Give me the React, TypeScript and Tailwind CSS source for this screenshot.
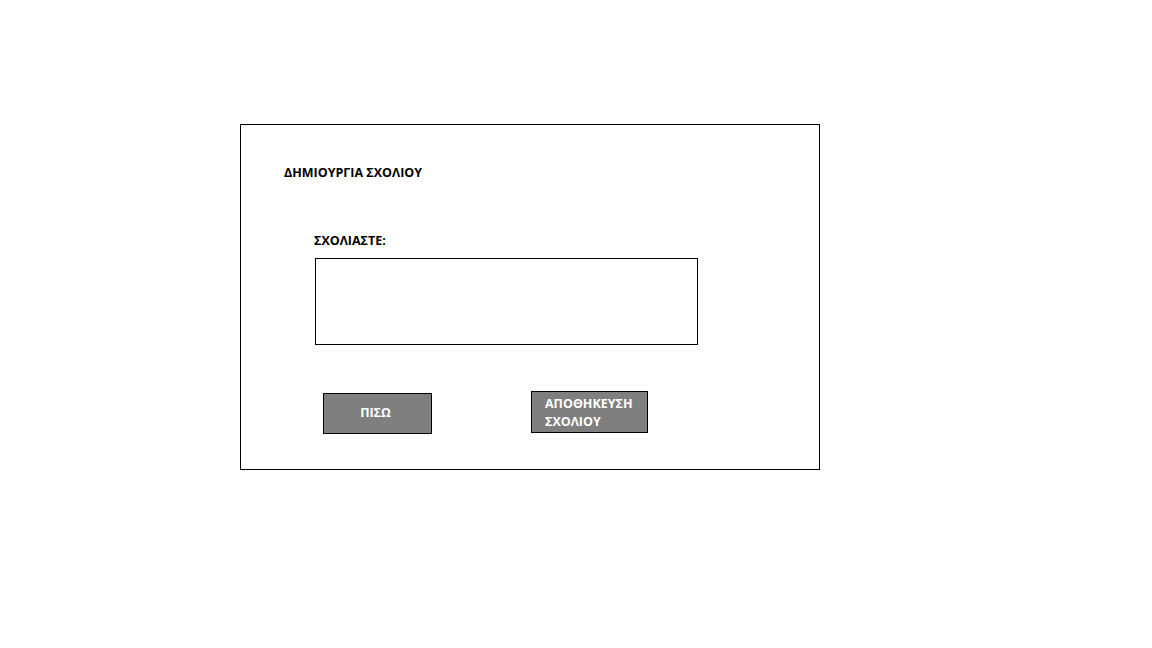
import React from "react";

export default function App() {
  const font = { fontFamily: '"Open Sans", "Noto Sans", sans-serif' };
  return (
    <div className="w-[1152px] h-[648px] bg-white overflow-hidden" style={font}>
      <div className="ml-[240px] mt-[124px] w-[580px] h-[346px] border border-black flex flex-col">
        <div className="ml-[43px] mt-[40px] text-[12.5px] leading-[16px] font-bold text-black">
          ΔΗΜΙΟΥΡΓΙΑ ΣΧΟΛΙΟΥ
        </div>
        <div className="ml-[73px] mt-[52px] text-[12.5px] leading-[16px] font-bold text-black">
          ΣΧΟΛΙΑΣΤΕ:
        </div>
        <div className="ml-[74px] mt-[9px] w-[383px] h-[87px] border border-black" />
        <div className="flex items-start mt-[46px]">
          <div className="ml-[82px] mt-[2px] w-[109px] h-[41px] bg-[#7f7f7f] border border-black flex items-center justify-center text-white text-[12.5px] font-bold pr-[4px]">
            ΠΙΣΩ
          </div>
          <div className="ml-[99px] w-[117px] h-[42px] bg-[#7f7f7f] border border-black text-white text-[12.5px] leading-[18px] font-bold pl-[13px] pt-[3px]">
            ΑΠΟΘΗΚΕΥΣΗ
            <br />
            ΣΧΟΛΙΟΥ
          </div>
        </div>
      </div>
    </div>
  );
}
